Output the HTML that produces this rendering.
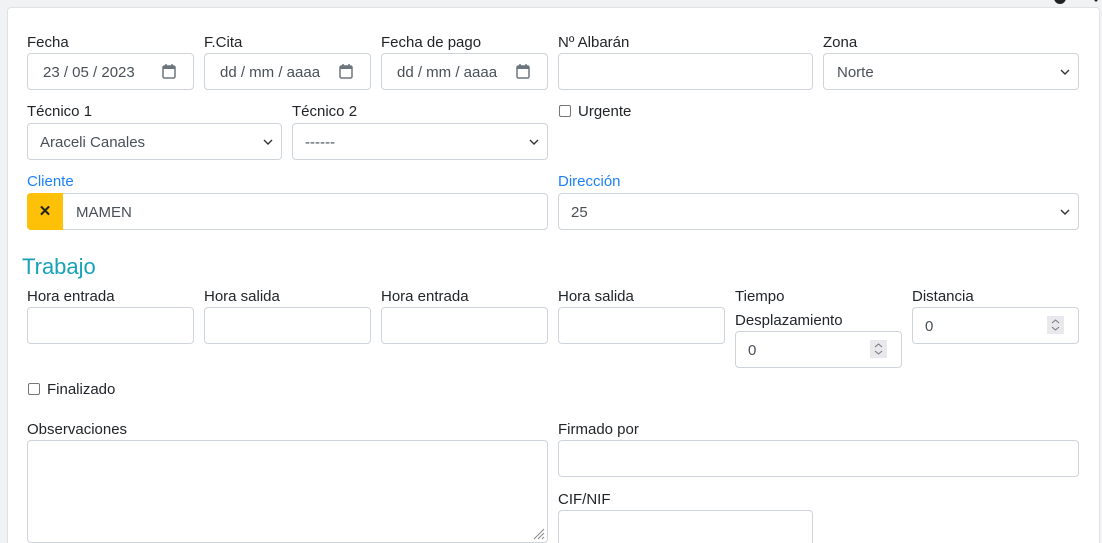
<!DOCTYPE html><html><head><style>
html,body{margin:0;width:1102px;height:543px;overflow:hidden}
body{background:#f1f2f3;font-family:"Liberation Sans",sans-serif;position:relative}
.card{position:absolute;left:7px;top:7px;width:1091px;height:536px;background:#fff;border:1px solid #dfe1e3;border-bottom:none;border-radius:4px 4px 0 0}
.l{position:absolute;font-size:15px;color:#212529;line-height:18px;white-space:nowrap}
.b{color:#1a82f5}
.i{position:absolute;height:35px;border:1px solid #ced4da;border-radius:4px;background:#fff;box-sizing:content-box;font-size:15px;color:#495057;line-height:37px}
.i span{position:absolute;left:12px}
.cal{position:absolute;right:17px;top:10px}
.ch{position:absolute;right:7px;top:12px;width:12px;height:12px}
.sp{position:absolute;right:14px;top:8px;width:17px;height:18px;background:#e9e9ed}
.cb{position:absolute;width:10px;height:10px;border:1.5px solid #767676;border-radius:2px}
</style></head><body>
<div class="card"></div>
<svg style="position:absolute;left:1050px;top:-6px" width="52" height="14"><circle cx="10" cy="4" r="6" fill="#222"/><path d="M38 0l8 -8 8 8-8 8z" fill="#222"/></svg>
<div class="l" style="left:27px;top:34px">Fecha</div>
<div class="l" style="left:204px;top:34px">F.Cita</div>
<div class="l" style="left:381px;top:34px">Fecha de pago</div>
<div class="l" style="left:558px;top:34px">Nº Albarán</div>
<div class="l" style="left:823px;top:34px">Zona</div>
<div class="i" style="left:27px;top:53px;width:165px"><span style="left:15px">23 / 05 / 2023</span><svg class="cal" width="14" height="15"><rect x="1" y="2" width="12" height="12" rx="1.5" fill="none" stroke="#6c757d" stroke-width="1.5"/><rect x="1" y="2" width="12" height="3" fill="#6c757d"/><path d="M4 0v3M10 0v3" stroke="#6c757d" stroke-width="1.5"/></svg></div>
<div class="i" style="left:204px;top:53px;width:165px"><span style="left:15px">dd / mm / aaaa</span><svg class="cal" width="14" height="15"><rect x="1" y="2" width="12" height="12" rx="1.5" fill="none" stroke="#6c757d" stroke-width="1.5"/><rect x="1" y="2" width="12" height="3" fill="#6c757d"/><path d="M4 0v3M10 0v3" stroke="#6c757d" stroke-width="1.5"/></svg></div>
<div class="i" style="left:381px;top:53px;width:165px"><span style="left:15px">dd / mm / aaaa</span><svg class="cal" width="14" height="15"><rect x="1" y="2" width="12" height="12" rx="1.5" fill="none" stroke="#6c757d" stroke-width="1.5"/><rect x="1" y="2" width="12" height="3" fill="#6c757d"/><path d="M4 0v3M10 0v3" stroke="#6c757d" stroke-width="1.5"/></svg></div>
<div class="i" style="left:558px;top:53px;width:253px"></div>
<div class="i" style="left:823px;top:53px;width:254px"><span style="left:13px">Norte</span><svg class="ch"><path d="M2 4l4 4 4-4" stroke="#333" stroke-width="1.4" fill="none"/></svg></div>
<div class="l" style="left:27px;top:103px">Técnico 1</div>
<div class="l" style="left:292px;top:103px">Técnico 2</div>
<div class="cb" style="left:559px;top:105px"></div><div class="l" style="left:578px;top:103px">Urgente</div>
<div class="i" style="left:27px;top:123px;width:253px"><span>Araceli Canales</span><svg class="ch"><path d="M2 4l4 4 4-4" stroke="#333" stroke-width="1.4" fill="none"/></svg></div>
<div class="i" style="left:292px;top:123px;width:254px"><span>------</span><svg class="ch"><path d="M2 4l4 4 4-4" stroke="#333" stroke-width="1.4" fill="none"/></svg></div>
<div class="l b" style="left:27px;top:173px">Cliente</div>
<div class="l b" style="left:558px;top:173px">Dirección</div>
<div class="i" style="left:27px;top:193px;width:519px"><div style="position:absolute;left:-1px;top:-1px;width:36px;height:37px;background:#ffc107;border-radius:4px 0 0 4px;text-align:center;font-weight:bold;color:#222;font-size:15px">✕</div><span style="left:48px">MAMEN</span></div>
<div class="i" style="left:558px;top:193px;width:519px"><span>25</span><svg class="ch"><path d="M2 4l4 4 4-4" stroke="#333" stroke-width="1.4" fill="none"/></svg></div>
<div class="l" style="left:22px;top:254px;font-size:22px;line-height:26px;color:#17a2b8">Trabajo</div>
<div class="l" style="left:27px;top:288px">Hora entrada</div>
<div class="l" style="left:204px;top:288px">Hora salida</div>
<div class="l" style="left:381px;top:288px">Hora entrada</div>
<div class="l" style="left:558px;top:288px">Hora salida</div>
<div class="l" style="left:735px;top:288px">Tiempo</div>
<div class="l" style="left:735px;top:312px">Desplazamiento</div>
<div class="l" style="left:912px;top:288px">Distancia</div>
<div class="i" style="left:27px;top:307px;width:165px"></div>
<div class="i" style="left:204px;top:307px;width:165px"></div>
<div class="i" style="left:381px;top:307px;width:165px"></div>
<div class="i" style="left:558px;top:307px;width:165px"></div>
<div class="i" style="left:735px;top:331px;width:165px"><span>0</span><svg class="sp" viewBox="0 0 17 18"><path d="M5 7l3.5-3 3.5 3M5 11l3.5 3 3.5-3" stroke="#777" fill="none"/></svg></div>
<div class="i" style="left:912px;top:307px;width:165px"><span>0</span><svg class="sp" viewBox="0 0 17 18"><path d="M5 7l3.5-3 3.5 3M5 11l3.5 3 3.5-3" stroke="#777" fill="none"/></svg></div>
<div class="cb" style="left:28px;top:383px"></div><div class="l" style="left:47px;top:381px">Finalizado</div>
<div class="l" style="left:27px;top:421px">Observaciones</div>
<div class="l" style="left:558px;top:421px">Firmado por</div>
<div class="i" style="left:27px;top:440px;width:519px;height:101px"><svg style="position:absolute;right:2px;top:87px" width="12" height="12"><path d="M11 1L1 11M11 5L5 11M11 9L9 11" stroke="#888"/></svg></div>
<div class="i" style="left:558px;top:440px;width:519px"></div>
<div class="l" style="left:558px;top:491px">CIF/NIF</div>
<div class="i" style="left:558px;top:510px;width:253px;height:33px;border-bottom:none;border-radius:4px 4px 0 0"></div>
</body></html>
